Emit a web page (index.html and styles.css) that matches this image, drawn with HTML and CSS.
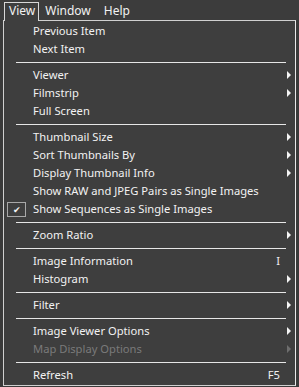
FILE: index.html
```html
<!DOCTYPE html>
<html lang="en">
<head>
    <meta charset="UTF-8">
    <title>View Menu</title>
    <link rel="stylesheet" href="styles.css">
</head>
<body>
    <div class="menubar">
        <span class="bar-item open">View</span>
        <span class="bar-item">Window</span>
        <span class="bar-item">Help</span>
    </div>
    <div class="menu">
        <div class="item"><span class="gutter"></span><span class="label">Previous Item</span></div>
        <div class="item"><span class="gutter"></span><span class="label">Next Item</span></div>
        <div class="sep"></div>
        <div class="item sub"><span class="gutter"></span><span class="label">Viewer</span></div>
        <div class="item sub"><span class="gutter"></span><span class="label">Filmstrip</span></div>
        <div class="item"><span class="gutter"></span><span class="label">Full Screen</span></div>
        <div class="sep"></div>
        <div class="item sub"><span class="gutter"></span><span class="label">Thumbnail Size</span></div>
        <div class="item sub"><span class="gutter"></span><span class="label">Sort Thumbnails By</span></div>
        <div class="item sub"><span class="gutter"></span><span class="label">Display Thumbnail Info</span></div>
        <div class="item"><span class="gutter"></span><span class="label">Show RAW and JPEG Pairs as Single Images</span></div>
        <div class="item"><span class="gutter"><span class="check">&#10004;</span></span><span class="label">Show Sequences as Single Images</span></div>
        <div class="sep"></div>
        <div class="item sub"><span class="gutter"></span><span class="label">Zoom Ratio</span></div>
        <div class="sep"></div>
        <div class="item"><span class="gutter"></span><span class="label">Image Information</span><span class="key">I</span></div>
        <div class="item sub"><span class="gutter"></span><span class="label">Histogram</span></div>
        <div class="sep"></div>
        <div class="item sub"><span class="gutter"></span><span class="label">Filter</span></div>
        <div class="sep"></div>
        <div class="item sub"><span class="gutter"></span><span class="label">Image Viewer Options</span></div>
        <div class="item sub disabled"><span class="gutter"></span><span class="label">Map Display Options</span></div>
        <div class="sep"></div>
        <div class="item"><span class="gutter"></span><span class="label">Refresh</span><span class="key">F5</span></div>
    </div>
</body>
</html>
```

FILE: styles.css
```css
body {
    margin: 0;
    background: #3a3a3a;
    font-family: "Noto Sans", sans-serif;
    font-size: 11.2px;
    color: #f2f2f2;
    width: 299px;
    height: 387px;
    overflow: hidden;
}
.menubar {
    display: flex;
    height: 20px;
    padding-left: 4px;
    background: #3c3c3c;
}
.bar-item {
    display: block;
    margin-top: 2px;
    padding: 0 6px 0 5px;
    line-height: 16px;
    font-size: 12px;
    border: 1px solid transparent;
    border-bottom: none;
}
.bar-item.open {
    padding: 0 3px 0 4px;
    border-color: #d8d8d8;
    background: #3e3e3e;
    position: relative;
    z-index: 1;
    margin-bottom: -1px;
}
.menu {
    margin-left: 3px;
    width: 291px;
    background: #3e3e3e;
    border: 1px solid #d0d0d0;
    border-right: 1px solid #e8e8e8;
    padding: 1px 0 0;
    height: 363px;
}
.item {
    display: flex;
    align-items: center;
    height: 18px;
    padding-right: 4px;
}
.gutter {
    width: 29px;
    flex: none;
    display: flex;
    align-items: center;
}
.label {
    flex: 1;
    white-space: nowrap;
    padding-bottom: 2px;
}
.key {
    margin-right: 11px;
    padding-bottom: 2px;
}
.sub::after {
    content: "";
    width: 0;
    height: 0;
    border-top: 4px solid transparent;
    border-bottom: 4px solid transparent;
    border-left: 4px solid #f4f4f4;
}
.disabled {
    color: #7a7a7a;
}
.disabled::after {
    border-left-color: #6e6e6e;
}
.check {
    margin-left: 3px;
    width: 17px;
    height: 13px;
    border: 1px solid #a8a8a8;
    font-size: 9px;
    line-height: 13px;
    text-align: center;
    color: #f4f4f4;
}
.sep {
    height: 8px;
    display: flex;
    align-items: center;
    padding: 0 9px 0 12px;
}
.sep::before {
    content: "";
    flex: 1;
    height: 1px;
    background: #e6e6e6;
}
```
